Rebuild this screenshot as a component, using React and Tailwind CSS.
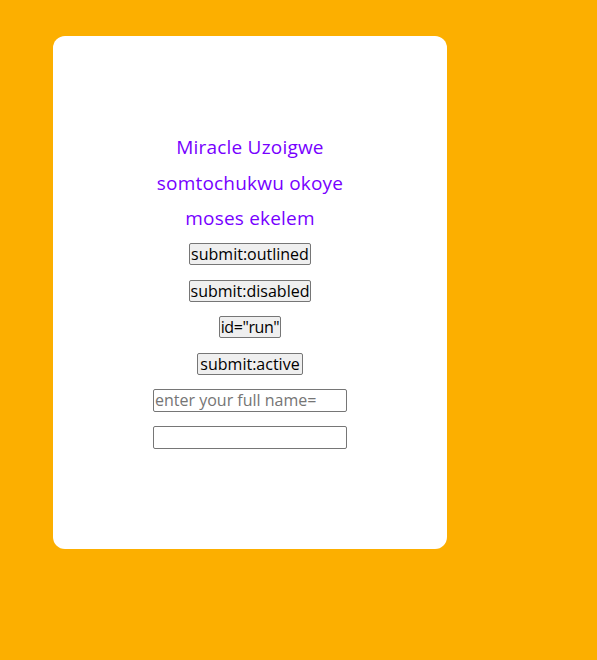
export default function App() {
  const font = { fontFamily: '"Open Sans", "DejaVu Sans", sans-serif' }
  const btn =
    "h-[22px] px-0 bg-[#efefef] border border-[#767676] rounded-[2px] text-[16px] leading-[20px] text-black whitespace-nowrap"

  return (
    <div className="min-h-[660px] w-full bg-[#fcaf00] pt-[36px] pl-[53px]" style={font}>
      <div className="w-[394px] h-[513px] bg-white rounded-[12px] flex flex-col items-center pt-[94px]">
        <div className="flex flex-col items-center text-[#7700ff] text-[19px] tracking-[0.2px]">
          <p className="h-[35.5px] leading-[35.5px]">Miracle Uzoigwe</p>
          <p className="h-[35.5px] leading-[35.5px]">somtochukwu okoye</p>
          <p className="h-[35.5px] leading-[35.5px]">moses ekelem</p>
        </div>

        <div className="flex flex-col items-center mt-[6px]">
          <button className={`${btn} w-[122px]`}>submit:outlined</button>
          <button className={`${btn} w-[122px] mt-[15px]`}>submit:disabled</button>
          <button className={`${btn} w-[62px] mt-[14px] tracking-[-0.4px]`}>id="run"</button>
          <button className={`${btn} w-[106px] mt-[15px]`}>submit:active</button>
        </div>

        <div className="flex flex-col items-center mt-[14px]">
          <input
            className="w-[194px] h-[23px] border border-[#767676] rounded-[2px] px-[1px] text-[16px] placeholder:text-[#757575] outline-none"
            placeholder="enter your full name="
          />
          <input className="w-[194px] h-[23px] mt-[14px] border border-[#767676] rounded-[2px] px-[1px] text-[16px] outline-none" />
        </div>
      </div>
    </div>
  )
}
